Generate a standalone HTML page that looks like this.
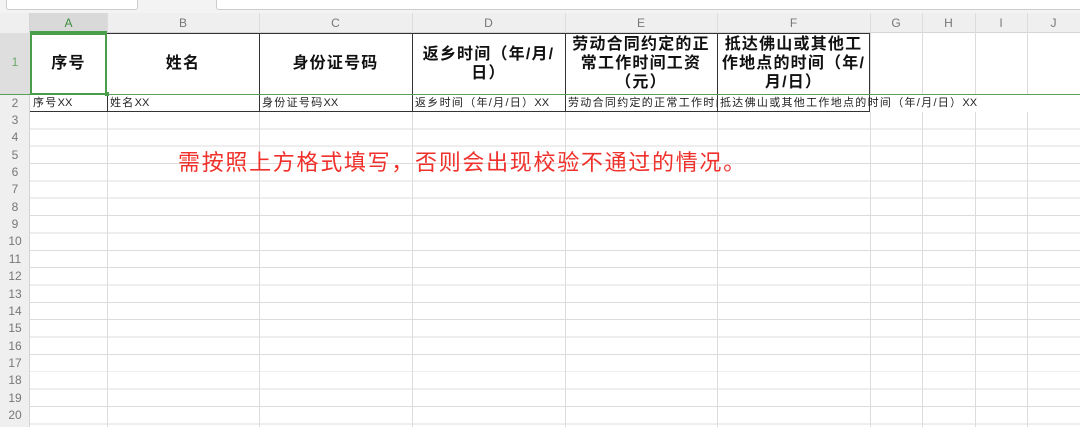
<!DOCTYPE html>
<html><head><meta charset="utf-8"><style>
body{margin:0;width:1080px;height:427px;overflow:hidden;background:#fff;position:relative;font-family:"Liberation Sans","Noto Sans CJK SC",sans-serif}
.a{position:absolute}
.grid{left:30px;top:112px;width:1050px;height:315px;background:repeating-linear-gradient(to bottom,transparent 0,transparent 16.35px,#dcdcdc 16.35px,#dcdcdc 17.35px)}
.v{position:absolute;top:13px;width:1px;height:414px;background:#dcdcdc}
.ch{position:absolute;top:13px;height:20px;line-height:20px;text-align:center;font-size:12px;color:#777}
.rh{position:absolute;left:0;width:30px;text-align:center;font-size:12px;color:#777}
.h1{position:absolute;top:33px;height:61px;display:flex;align-items:center;justify-content:center;text-align:center;font-weight:bold;font-size:16px;letter-spacing:1.2px;line-height:19px;color:#111;padding:0 3px;box-sizing:border-box}
.c2{position:absolute;top:95px;height:17px;line-height:17px;font-size:11px;letter-spacing:1.3px;color:#222;white-space:nowrap;overflow:hidden;padding-left:2px}
.c2 i{font-style:normal;letter-spacing:0}
</style></head><body>
<div class="a" style="left:0;top:0;width:1080px;height:13px;background:#f3f3f3"></div>
<div class="a" style="left:6px;top:-4px;width:130px;height:12px;border:1px solid #ccc;border-radius:3px;background:#fff"></div>
<div class="a" style="left:216px;top:-4px;width:870px;height:12px;border:1px solid #ccc;border-radius:3px;background:#fff"></div>
<div class="a" style="left:0;top:13px;width:1080px;height:20px;background:#efefef;border-bottom:1px solid #d4d4d4;box-sizing:border-box"></div>
<div class="a" style="left:0;top:13px;width:30px;height:414px;background:#efefef;border-right:1px solid #d4d4d4;box-sizing:border-box"></div>
<div class="a" style="left:30px;top:13px;width:77px;height:20px;background:#d9d9d9;border-bottom:2px solid #4a9d4a;box-sizing:border-box"></div>
<div class="a" style="left:0;top:33px;width:30px;height:61px;background:#dedede"></div>
<div class="a grid"></div>
<div class="v" style="left:107px"></div><div class="v" style="left:259px"></div><div class="v" style="left:412px"></div><div class="v" style="left:565px"></div><div class="v" style="left:717px"></div><div class="v" style="left:870px"></div><div class="v" style="left:922px"></div><div class="v" style="left:975px"></div><div class="v" style="left:1027px"></div>
<div class="a" style="left:30px;top:33px;width:840px;height:61px;background:#fff"></div>
<div class="a" style="left:30px;top:95px;width:1050px;height:17px;background:#fff"></div>
<div class="ch" style="left:30px;width:77px;color:#3c8c3c">A</div><div class="ch" style="left:107px;width:152px">B</div><div class="ch" style="left:259px;width:153px">C</div><div class="ch" style="left:412px;width:153px">D</div><div class="ch" style="left:565px;width:152px">E</div><div class="ch" style="left:717px;width:153px">F</div><div class="ch" style="left:870px;width:52px">G</div><div class="ch" style="left:922px;width:53px">H</div><div class="ch" style="left:975px;width:52px">I</div><div class="ch" style="left:1027px;width:53px">J</div>
<div class="rh" style="top:55px;color:#6aa86a">1</div>
<div class="rh" style="top:96px">2</div>
<div class="rh" style="top:113px">3</div><div class="rh" style="top:130px">4</div><div class="rh" style="top:148px">5</div><div class="rh" style="top:165px">6</div><div class="rh" style="top:182px">7</div><div class="rh" style="top:200px">8</div><div class="rh" style="top:217px">9</div><div class="rh" style="top:234px">10</div><div class="rh" style="top:252px">11</div><div class="rh" style="top:269px">12</div><div class="rh" style="top:287px">13</div><div class="rh" style="top:304px">14</div><div class="rh" style="top:321px">15</div><div class="rh" style="top:339px">16</div><div class="rh" style="top:356px">17</div><div class="rh" style="top:373px">18</div><div class="rh" style="top:391px">19</div><div class="rh" style="top:408px">20</div>
<div class="a" style="left:107px;top:33px;width:763px;height:79px;border:1px solid #333;border-left:none;box-sizing:border-box"></div>
<div class="a" style="left:30px;top:94px;width:840px;height:18px;border-bottom:1px solid #333;box-sizing:border-box"></div>
<div class="a" style="left:259px;top:33px;width:1px;height:79px;background:#333"></div><div class="a" style="left:412px;top:33px;width:1px;height:79px;background:#333"></div><div class="a" style="left:565px;top:33px;width:1px;height:79px;background:#333"></div><div class="a" style="left:717px;top:33px;width:1px;height:79px;background:#333"></div>
<div class="a" style="left:107px;top:94px;width:1px;height:18px;background:#333"></div>
<div class="a" style="left:0;top:94px;width:1080px;height:1px;background:#5a9e5a"></div>
<div class="h1" style="left:30px;width:77px">序号</div><div class="h1" style="left:107px;width:152px">姓名</div><div class="h1" style="left:259px;width:153px">身份证号码</div><div class="h1" style="left:412px;width:153px">返乡时间（年/月/日）</div><div class="h1" style="left:565px;width:152px">劳动合同约定的正常工作时间工资（元）</div><div class="h1" style="left:717px;width:153px">抵达佛山或其他工作地点的时间（年/月/日）</div>
<div class="a" style="left:30px;top:33px;width:77px;height:62px;border:2px solid #4a9d4a;box-sizing:border-box"></div>
<div class="a" style="left:105px;top:92px;width:4px;height:4px;background:#4a9d4a"></div>
<div class="c2" style="left:31px;width:74px">序号<i>XX</i></div><div class="c2" style="left:108px;width:148px">姓名<i>XX</i></div><div class="c2" style="left:260px;width:150px">身份证号码<i>XX</i></div><div class="c2" style="left:413px;width:150px">返乡时间（年/月/日）<i>XX</i></div><div class="c2" style="left:566px;width:149px">劳动合同约定的正常工作时间</div><div class="c2" style="left:718px;width:300px;background:transparent">抵达佛山或其他工作地点的时间（年/月/日）<i>XX</i></div>
<div class="a" style="left:178px;top:145px;font-size:22px;color:#f0302a;white-space:nowrap;letter-spacing:1.7px">需按照上方格式填写，否则会出现校验不通过的情况。</div>
</body></html>
